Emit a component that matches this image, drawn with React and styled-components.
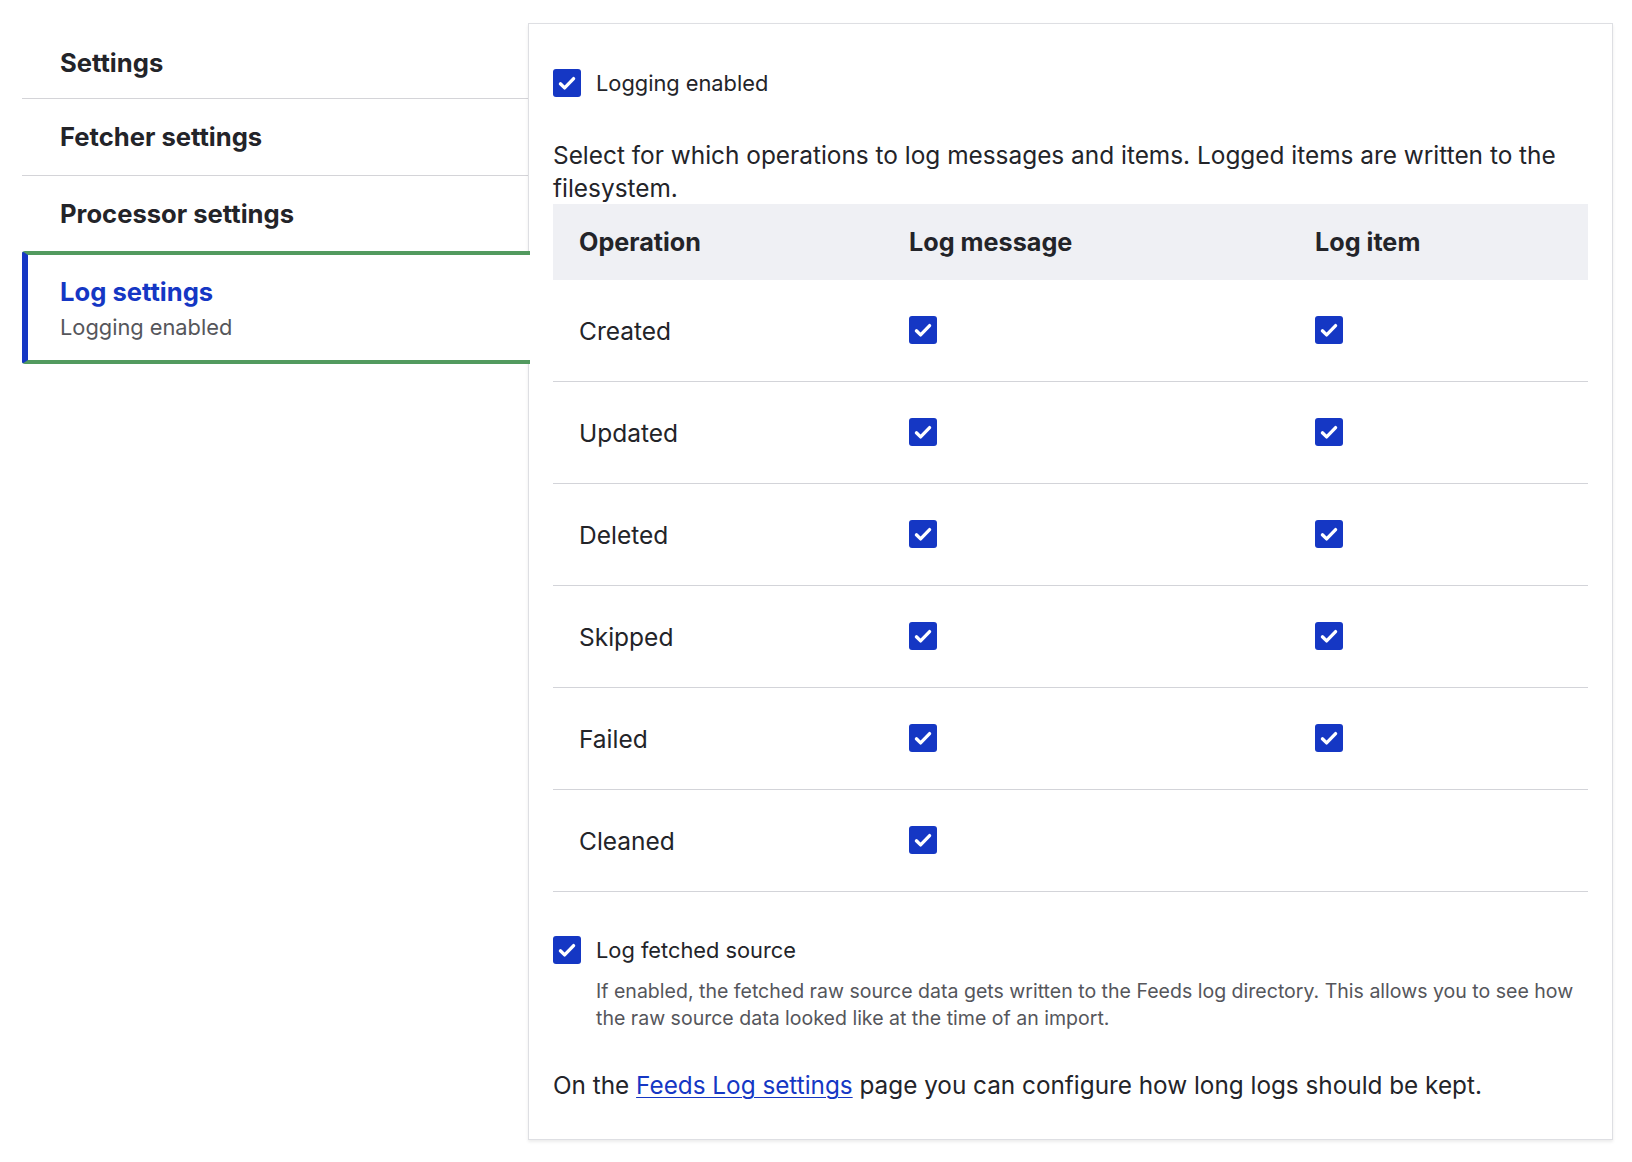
import React from 'react';
import styled, { createGlobalStyle } from 'styled-components';

const BLUE = "#1537c4";
const TEXT = "#232429";

const GlobalStyle = createGlobalStyle`
    body {
        margin: 0;
        background: #ffffff;
        font-family: Inter, "Noto Sans", sans-serif;
        color: ${TEXT};
    }
`;

const OPERATIONS = [
    { name: "Created", message: true, item: true },
    { name: "Updated", message: true, item: true },
    { name: "Deleted", message: true, item: true },
    { name: "Skipped", message: true, item: true },
    { name: "Failed", message: true, item: true },
    { name: "Cleaned", message: true, item: false },
];

const TABS = [
    { title: "Settings" },
    { title: "Fetcher settings" },
    { title: "Processor settings" },
    { title: "Log settings", summary: "Logging enabled", active: true },
];


function Checkbox() {
    return (
        <Box>
            <svg width="28" height="28" viewBox="0 0 28 28" fill="none">
                <path d="M7.4 14.8 L11.6 18.9 L20.6 9.6" stroke="#fff" strokeWidth="3.3" strokeLinecap="round" strokeLinejoin="round" />
            </svg>
        </Box>
    );
}

function App() {
    return (
        <Page>
            <GlobalStyle />
            <Sidebar>
                {TABS.map(tab => (
                    <Tab key={tab.title} active={tab.active}>
                        <TabTitle active={tab.active}>{tab.title}</TabTitle>
                        {tab.summary && <TabSummary>{tab.summary}</TabSummary>}
                    </Tab>
                ))}
            </Sidebar>
            <Panel>
                <CheckRow>
                    <Checkbox />
                    <Label>Logging enabled</Label>
                </CheckRow>
                <Intro>
                    Select for which operations to log messages and items. Logged items are written to the filesystem.
                </Intro>
                <Table>
                    <colgroup>
                        <col style={{ width: "330px" }} />
                        <col style={{ width: "406px" }} />
                        <col />
                    </colgroup>
                    <thead>
                        <tr>
                            <Th>Operation</Th>
                            <Th>Log message</Th>
                            <Th>Log item</Th>
                        </tr>
                    </thead>
                    <tbody>
                        {OPERATIONS.map(op => (
                            <Tr key={op.name}>
                                <Td>{op.name}</Td>
                                <Td>{op.message && <Checkbox />}</Td>
                                <Td>{op.item && <Checkbox />}</Td>
                            </Tr>
                        ))}
                    </tbody>
                </Table>
                <SourceRow>
                    <Checkbox />
                    <Label>Log fetched source</Label>
                </SourceRow>
                <Description>
                    If enabled, the fetched raw source data gets written to the Feeds log directory. This allows you to see how the raw source data looked like at the time of an import.
                </Description>
                <Footer>
                    On the <Link href="#">Feeds Log settings</Link> page you can configure how long logs should be kept.
                </Footer>
            </Panel>
        </Page>
    );
}

const Page = styled.div`
    display: flex;
    align-items: flex-start;
    padding: 23px 19px 23px 22px;
`;

const Sidebar = styled.nav`
    width: 506px;
    flex-shrink: 0;
    display: flex;
    flex-direction: column;
    margin-top: -1px;
`;

const Tab = styled.div`
    display: flex;
    flex-direction: column;
    justify-content: center;
    padding-left: 38px;
    ${props => props.active ? `
    height: 105px;
    margin-right: -2px;
    padding-left: 32px;
    border-left: 6px solid ${BLUE};
    border-top: 4px solid #529a5f;
    border-bottom: 4px solid #529a5f;
    border-radius: 3px 0 0 3px;
    background: #fff;
    position: relative;
    z-index: 1;
    ` : `
    height: 76px;
    border-bottom: 1px solid #d4d4d8;
    &:first-child { padding-top: 5px; height: 71px; }
    &:nth-child(3) { border-bottom: none; height: 75px; }
    `}
`;

const TabTitle = styled.div`
    font-size: 25.6px;
    font-weight: 700;
    line-height: 32px;
    color: ${props => props.active ? BLUE : TEXT};
    margin-top: ${props => props.active ? "4px" : "0"};
`;

const TabSummary = styled.div`
    font-size: 21.8px;
    line-height: 32px;
    color: #55565b;
    margin-top: 3px;
`;

const Panel = styled.section`
    flex: 1;
    padding: 0 24px 37px;
    border: 1px solid #dedfe3;
    background: #fff;
    box-shadow: 0 2px 3px rgba(0, 0, 0, 0.08);
`;

const CheckRow = styled.label`
    display: flex;
    align-items: center;
    gap: 15px;
    margin-top: 45px;
`;

const SourceRow = styled(CheckRow)`
    margin-top: 44px;
`;

const Box = styled.span`
    width: 28px;
    height: 28px;
    border-radius: 3px;
    background: ${BLUE};
    display: inline-flex;
    align-items: center;
    justify-content: center;
    flex-shrink: 0;
    vertical-align: middle;
`;

const Label = styled.span`
    font-size: 21.8px;
    line-height: 28px;
`;

const Intro = styled.p`
    margin: 42px 0 0;
    font-size: 24.4px;
    line-height: 33px;
`;

const Table = styled.table`
    width: 100%;
    border-collapse: collapse;
    margin-top: -1px;
`;

const Th = styled.th`
    height: 76px;
    padding: 0 26px;
    text-align: left;
    background: #eff0f4;
    font-size: 25.2px;
    font-weight: 700;
`;

const Tr = styled.tr`
    border-bottom: 1px solid #d3d4d9;
`;

const Td = styled.td`
    height: 101px;
    padding: 0 26px;
    font-size: 24.5px;
    vertical-align: middle;
    & > span { display: flex; margin-top: -1px; }
`;

const Description = styled.p`
    margin: 14px 0 0 43px;
    font-size: 19.55px;
    line-height: 27px;
    color: #55565b;
`;

const Footer = styled.p`
    margin: 37px 0 0;
    font-size: 24.3px;
    line-height: 33px;
`;

const Link = styled.a`
    color: ${BLUE};
    text-decoration: underline;
    text-underline-offset: 3px;
    text-decoration-thickness: 1px;
`;

export default App;
